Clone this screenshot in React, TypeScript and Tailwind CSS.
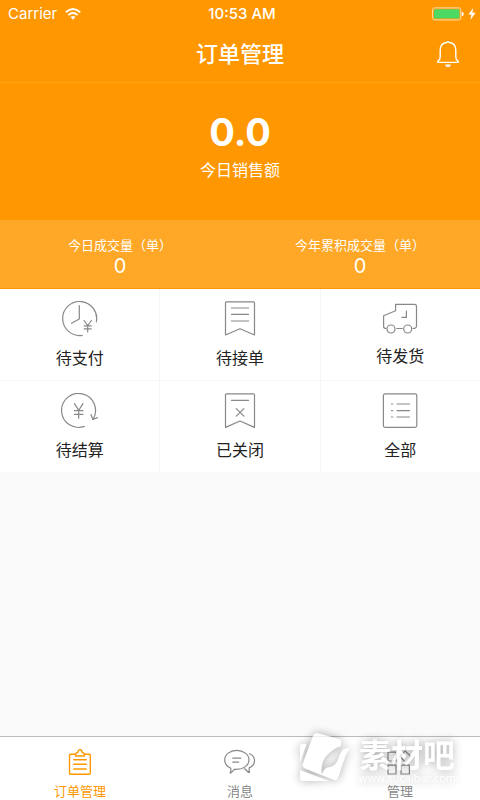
import { useState, type ReactNode } from "react";

const iconProps = {
  fill: "none",
  stroke: "currentColor",
  strokeWidth: 1.2,
  strokeLinecap: "round" as const,
  strokeLinejoin: "round" as const,
};

function PayIcon() {
  return (
    <svg width="36" height="36" viewBox="0 0 36 36" {...iconProps}>
      <path d="M34.3 21A17 17 0 1 0 20.3 34.3" />
      <path d="M17.3 4.7V18L9.5 22.3" />
      <path d="M22 19.5L25.7 24.5L29.4 19.5M25.7 24.5V31M22.2 24.9H29.2M22.2 27.9H29.2" />
    </svg>
  );
}

function ReceiptIcon() {
  return (
    <svg width="36" height="36" viewBox="0 0 36 36" {...iconProps}>
      <path d="M3.5 34V1.8Q3.5 .8 4.5 .8H31.5Q32.5 .8 32.5 1.8V34L18 27.7Z" />
      <path d="M9.5 7H26.5M9.5 13.4H26.5M9.5 20H26.5" />
    </svg>
  );
}

function TruckIcon() {
  return (
    <svg width="36" height="34" viewBox="0 -2 36 34" {...iconProps}>
      <path d="M4.2 25.5Q1.6 25.5 1.6 23.5V12.8L13.6 7.7V1.4H32.5Q34.5 1.4 34.5 3.4V23Q34.5 25.5 31 25.5" />
      <path d="M14.8 25.5H20.2M24.4 8V14.4H20" />
      <circle cx="9" cy="26" r="4" />
      <circle cx="25.7" cy="26" r="4" />
    </svg>
  );
}

function SettleIcon() {
  return (
    <svg width="38" height="36" viewBox="-1 0 38 36" {...iconProps}>
      <path d="M22.3 33.4A17 17 0 1 1 31.2 26" />
      <path d="M29 21.5L30.8 26.5L35.4 24.6" />
      <path d="M12.4 10.7L16.7 17.3L21 10.7M16.7 17.3V25.3M12.4 17.7H21M12.4 21.3H21" />
    </svg>
  );
}

function ClosedIcon() {
  return (
    <svg width="36" height="36" viewBox="0 0 36 36" {...iconProps}>
      <path d="M3.5 34.4V1.8Q3.5 .8 4.5 .8H31.5Q32.5 .8 32.5 1.8V34.4L18 28Z" />
      <path d="M9.5 7.3H26.5M14.3 15.6L21.9 23.2M21.9 15.6L14.3 23.2" />
    </svg>
  );
}

function AllIcon() {
  return (
    <svg width="36" height="36" viewBox="0 0 36 36" {...iconProps}>
      <rect x="1.4" y=".8" width="33.4" height="33.6" rx="1.8" />
      <path d="M15 11H27.5M15 17.6H27.5M15 24H27.5M9.5 11H10.7M9.5 17.6H10.7M9.5 24H10.7" />
    </svg>
  );
}

function OrderTabIcon() {
  return (
    <svg width="32" height="26" viewBox="0 0 32 26" {...iconProps} strokeWidth={1.4}>
      <path d="M11.6 5.2H6.5Q5.5 5.2 5.5 6.2V24.2Q5.5 25.2 6.5 25.2H25.3Q26.3 25.2 26.3 24.2V6.2Q26.3 5.2 25.3 5.2H20.4" />
      <path d="M11.6 7V4.6L14 3.2Q14 .8 16 .8T18 3.2L20.4 4.6V7Z" />
      <path d="M9.7 10.8H22.3M9.7 15.3H22.3M9.7 20H22.3" />
    </svg>
  );
}

function MessageTabIcon() {
  return (
    <svg width="32" height="26" viewBox="0 0 32 26" {...iconProps}>
      <path d="M6.8 19.2C2.8 17.4 .7 14.3 .7 10.9C.7 5.5 6 1.4 12.7 1.4S25 5.5 25 10.9S19.5 20.3 12.7 20.3Q11.5 20.3 10.6 20.1Q8.6 22.6 6.2 24.2Q7 21.6 6.8 19.2Z" />
      <path d="M25.5 4.8C28.5 6 30.5 8.6 30.5 11.6C30.5 14.6 28.2 17.5 25.2 18.9Q25 21.3 25.4 23.6Q22.6 22.3 21.3 20.1L20 20" />
      <path d="M8.8 9.2H16.8M8.8 13.2H14.6" />
    </svg>
  );
}

function ManageTabIcon() {
  return (
    <svg width="32" height="26" viewBox="0 0 32 26" {...iconProps}>
      <path d="M4 3.2H12V12H4ZM4 16.2H12V25H4ZM17 16.2H25.4V25H17ZM21.2 1.8L26.6 7.4L21.2 13L15.8 7.4Z" />
    </svg>
  );
}

function Cell({ icon, label }: { icon: ReactNode; label: string }) {
  return (
    <button className="flex flex-col items-center gap-[9px] bg-white pt-3 pb-[10px] text-base leading-6 text-[#222]">
      <span className="text-[#888]">{icon}</span>
      {label}
    </button>
  );
}

const cells = [
  { label: "待支付", icon: <PayIcon /> },
  { label: "待接单", icon: <ReceiptIcon /> },
  { label: "待发货", icon: <TruckIcon /> },
  { label: "待结算", icon: <SettleIcon /> },
  { label: "已关闭", icon: <ClosedIcon /> },
  { label: "全部", icon: <AllIcon /> },
];

const tabs = [
  { label: "订单管理", icon: <OrderTabIcon /> },
  { label: "消息", icon: <MessageTabIcon /> },
  { label: "管理", icon: <ManageTabIcon /> },
];

const stats = [
  { label: "今日成交量（单）", value: "0" },
  { label: "今年累积成交量（单）", value: "0" },
];

function StatusBar() {
  return (
    <div className="grid h-7 grid-cols-3 items-center pr-1 pl-2 text-[15px] leading-5">
      <div className="flex items-center gap-2">
        <span>Carrier</span>
        <svg width="16" height="12" viewBox="0 0 16 12" fill="none" stroke="white" strokeWidth="1.9">
          <path d="M.8 4.3Q8 -2.3 15.2 4.3M3.4 7.1Q8 3 12.6 7.1" />
          <path d="M5.5 9Q8 6.8 10.5 9L8 11.7Z" fill="white" stroke="none" />
        </svg>
      </div>
      <span className="text-center font-medium">10:53 AM</span>
      <div className="flex items-center justify-end gap-1">
        <svg width="32" height="14" viewBox="0 0 32 14">
          <rect x=".6" y=".9" width="28.2" height="12" rx="2" fill="none" stroke="#ffe0b0" />
          <rect x="2" y="2.2" width="25.4" height="9.4" rx="1" fill="#4cd964" />
          <path d="M29.8 4.8Q31.8 5.2 31.8 7T29.8 9.2Z" fill="white" />
        </svg>
        <svg width="8" height="12" viewBox="0 0 8 12" fill="white">
          <path d="M5.2 0L.4 6.6H3.4L2.4 12L7.6 4.8H4.4Z" />
        </svg>
      </div>
    </div>
  );
}

function Watermark() {
  return (
    <div className="pointer-events-none absolute right-6 bottom-4 flex items-start gap-1.5 text-white opacity-75 drop-shadow-[0_0_5px_rgba(0,0,0,0.45)]">
      <svg width="54" height="50" viewBox="0 0 54 50" fill="white">
        <path d="M4 12H7.5L1 31V15Q1 12 4 12ZM1 38L30 49H4Q1 49 1 46Z" />
        <path d="M19 1.2L40 7Q42.6 7.8 42.3 10.5L42 14Q33 17 26.5 25Q21.5 32 22.7 42.3Q24 38 27.5 35.8Q35 35 38.5 29Q40 23 43.7 17.5L51 15.7Q46 23 44 31L39.5 45Q38.3 49 34.5 47.8L6 36.5Q2.7 35 3.8 31.8L13.8 4Q15.5 .2 19 1.2Z" />
      </svg>
      <div className="flex flex-col pt-2">
        <span className="text-[32px] leading-8 font-bold">素材吧</span>
        <span className="font-['Open_Sans',sans-serif] text-[11px] leading-3 font-medium">www.sucaibar.com</span>
      </div>
    </div>
  );
}

export default function App() {
  const [active, setActive] = useState(0);

  return (
    <div className="relative flex min-h-screen flex-col bg-[#fafafa] font-['Inter','Noto_Sans_CJK_SC',sans-serif]">
      {/* Header */}
      <header className="border-b border-[#ffa31a] bg-[#ff9800] text-white">
        <StatusBar />
        <div className="grid grid-cols-3 items-center px-4 pt-[10px] pb-3">
          <h1 className="col-start-2 text-center text-[22px] leading-8 font-medium">订单管理</h1>
          <button aria-label="通知" className="flex justify-self-end px-1">
            <svg width="24" height="28" viewBox="0 0 24 28" fill="none" stroke="white" strokeWidth="1.4" strokeLinejoin="round">
              <path d="M1.8 21.4Q4.2 19.8 4.2 17V10.5Q4.2 3.2 10.6 2.5Q12 1 13.4 2.5Q19.8 3.2 19.8 10.5V17Q19.8 19.8 22.2 21.4V22.4H1.8Z" />
              <path d="M9 24.4H15Q14.5 27 12 27T9 24.4Z" fill="white" stroke="none" />
            </svg>
          </button>
        </div>
      </header>

      {/* Sales */}
      <section className="flex flex-col items-center gap-1 bg-[#ff9800] pt-[27px] pb-[38px] text-white">
        <p className="text-[38px] leading-11 font-bold">0.0</p>
        <p className="text-base leading-6">今日销售额</p>
      </section>
      <section className="grid grid-cols-2 border-b border-[#ff9800] bg-[#ffa726] pt-[15px] pb-3 text-center text-white">
        {stats.map((stat) => (
          <div key={stat.label} className="flex flex-col gap-px">
            <p className="text-[13px] leading-5">{stat.label}</p>
            <p className="text-xl leading-5">{stat.value}</p>
          </div>
        ))}
      </section>

      {/* Order states */}
      <section className="grid grid-cols-3 gap-px bg-[#f7f7f7]">
        {cells.map((cell) => (
          <Cell key={cell.label} icon={cell.icon} label={cell.label} />
        ))}
      </section>

      {/* Tab bar */}
      <nav className="mt-auto grid grid-cols-3 border-t border-[#bbb] bg-white">
        {tabs.map((tab, index) => (
          <button
            key={tab.label}
            onClick={() => setActive(index)}
            className={`flex flex-col items-center gap-2 pt-3 pb-px text-[13px] leading-4 ${
              index === active ? "text-[#ff9800]" : "text-[#888]"
            }`}
          >
            {tab.icon}
            {tab.label}
          </button>
        ))}
      </nav>

      <Watermark />
    </div>
  );
}
